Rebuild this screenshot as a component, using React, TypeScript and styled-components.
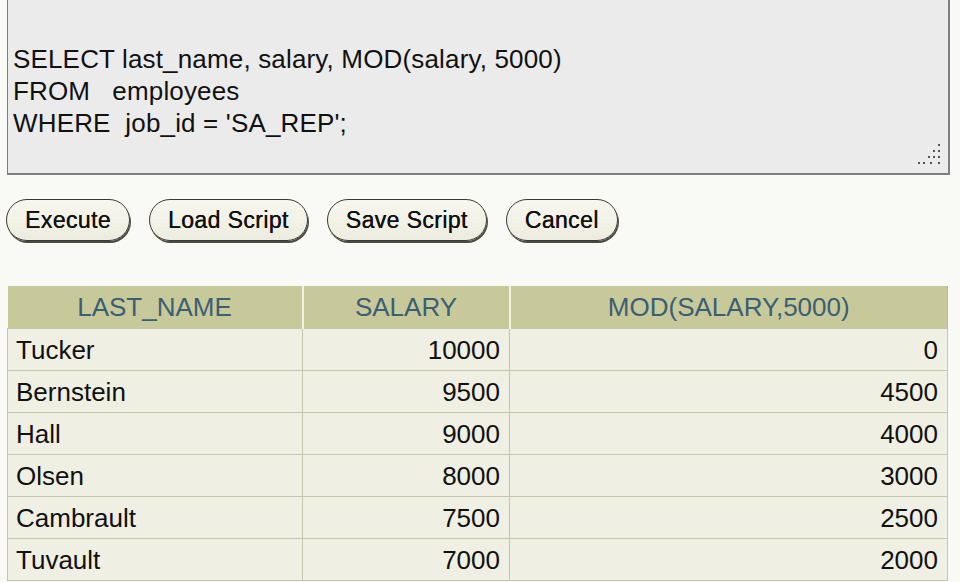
import React from "react";
import styled, { createGlobalStyle } from "styled-components";

const Global = createGlobalStyle`
  html, body {
    margin: 0;
    padding: 0;
    background: #f9f9f6;
  }
  body {
    font-family: "Liberation Sans", Arial, sans-serif;
    width: 960px;
    height: 582px;
    overflow: hidden;
  }
`;

const Page = styled.div`
  display: flex;
  flex-direction: column;
  padding: 0 0 0 7px;
  width: 960px;
  box-sizing: border-box;
`;

const Editor = styled.div`
  position: relative;
  width: 943px;
  height: 175px;
  box-sizing: border-box;
  background: #ebebeb;
  border: 1px solid #7e7e7e;
  border-top: none;
  border-right-width: 2px;
  border-bottom-width: 2px;
  padding: 43px 0 0 5px;
`;

const Code = styled.pre`
  margin: 0;
  font-family: "Liberation Sans", Arial, sans-serif;
  font-size: 26px;
  letter-spacing: 0.16px;
  line-height: 32px;
  color: #111;
  white-space: pre;
`;

const Grip = styled.svg`
  position: absolute;
  right: 7px;
  bottom: 8px;
`;

const ButtonRow = styled.div`
  display: flex;
  gap: 19px;
  margin: 24px 0 0 -1px;
`;

const Button = styled.button`
  height: 42px;
  padding: 0 18px;
  border-radius: 21px;
  border: 1px solid #3a3a32;
  background: linear-gradient(#f7f7ee, #ecece0);
  box-shadow: 1px 2px 0 #4a4a40;
  font-family: "Liberation Sans", Arial, sans-serif;
  font-size: 23px;
  letter-spacing: 0.4px;
  color: #111;
  text-shadow: 0.3px 0 0 #111;
  cursor: pointer;
`;

const Table = styled.table`
  margin-top: 45px;
  width: 940px;
  border-collapse: collapse;
  font-family: "Liberation Sans", Arial, sans-serif;
  font-size: 26px;
  table-layout: fixed;
`;

const Th = styled.th`
  height: 42px;
  padding: 2px 0 0;
  box-sizing: border-box;
  background: #c8c99b;
  color: #3b5f72;
  font-weight: normal;
  font-size: 26px;
  text-align: center;
  border-right: 2px solid #f2f2e4;
  &:last-child {
    border-right: 1px solid #b9b99c;
  }
`;

const Td = styled.td<{ $num?: boolean }>`
  height: 42px;
  box-sizing: border-box;
  padding: 2px ${(p) => (p.$num ? "9px" : "0")} 0 ${(p) => (p.$num ? "0" : "8px")};
  background: #efefe3;
  color: #111;
  text-align: ${(p) => (p.$num ? "right" : "left")};
  border: 1px solid #c6c6b0;
  line-height: 38px;
`;

const rows: [string, number, number][] = [
  ["Tucker", 10000, 0],
  ["Bernstein", 9500, 4500],
  ["Hall", 9000, 4000],
  ["Olsen", 8000, 3000],
  ["Cambrault", 7500, 2500],
  ["Tuvault", 7000, 2000],
];

const gripDots: [number, number][] = [
  [20, 0],
  [15, 6], [20, 6],
  [10, 12], [15, 12], [20, 12],
  [0, 18], [5, 18], [12, 18], [20, 18],
];

export default function App() {
  return (
    <>
      <Global />
      <Page>
        <Editor>
          <Code>{"SELECT last_name, salary, MOD(salary, 5000)\nFROM   employees\nWHERE  job_id = 'SA_REP';"}</Code>
          <Grip width="23" height="21" viewBox="0 0 23 21">
            {gripDots.map(([x, y], i) => (
              <rect key={i} x={x} y={y} width="2" height="2" fill="#555" />
            ))}
          </Grip>
        </Editor>
        <ButtonRow>
          <Button>Execute</Button>
          <Button>Load Script</Button>
          <Button>Save Script</Button>
          <Button>Cancel</Button>
        </ButtonRow>
        <Table>
          <colgroup>
            <col style={{ width: 295 }} />
            <col style={{ width: 207 }} />
            <col style={{ width: 438 }} />
          </colgroup>
          <thead>
            <tr>
              <Th>LAST_NAME</Th>
              <Th>SALARY</Th>
              <Th>MOD(SALARY,5000)</Th>
            </tr>
          </thead>
          <tbody>
            {rows.map(([n, s, m]) => (
              <tr key={n}>
                <Td>{n}</Td>
                <Td $num>{s}</Td>
                <Td $num>{m}</Td>
              </tr>
            ))}
          </tbody>
        </Table>
      </Page>
    </>
  );
}
